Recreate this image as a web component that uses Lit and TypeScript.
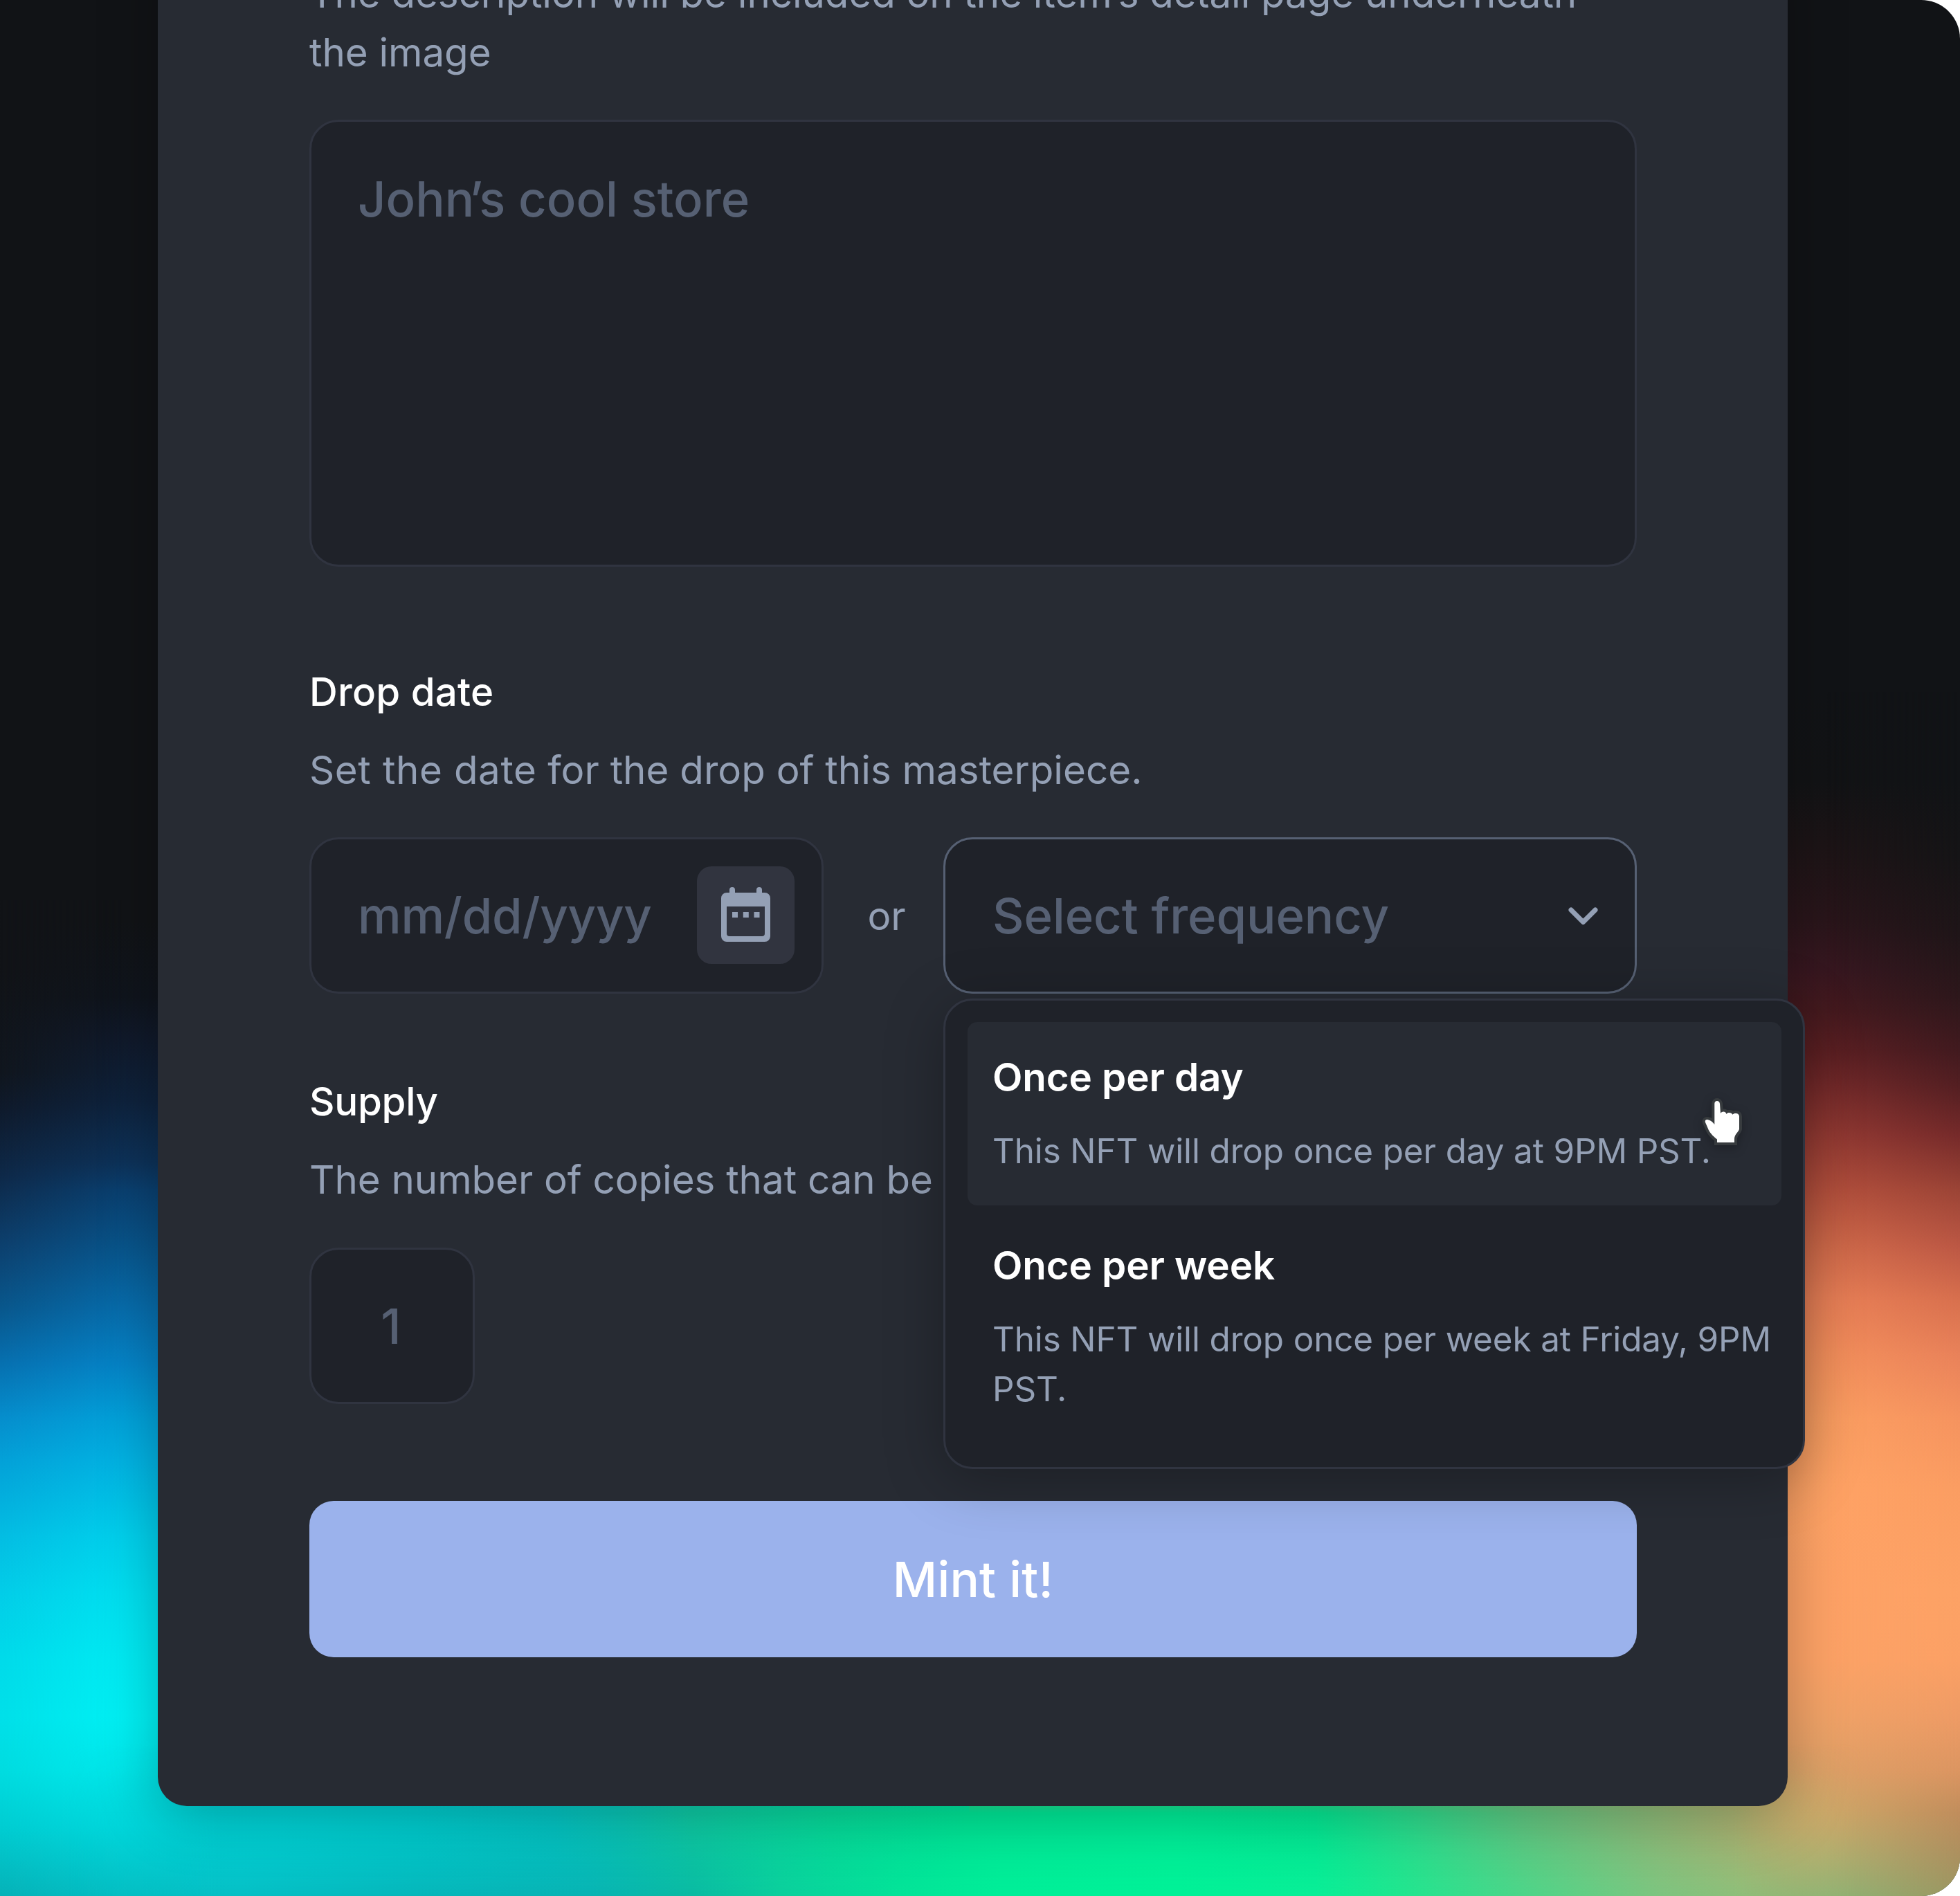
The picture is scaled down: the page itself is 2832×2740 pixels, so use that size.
import { LitElement, html, svg, css } from "lit";
import { customElement } from "lit/decorators.js";

type Stop = [number, string];

const stops = (list: Stop[], from: number, to: number) =>
  list.map(([p, c]) => svg`<stop offset=${(p - from) / (to - from)} stop-color=${c}></stop>`);

const LEFT_OUTER: Stop[] = [
  [1400, "#111317"], [1550, "#10161e"], [1600, "#0f1a2b"], [1700, "#0e2949"], [1800, "#0d406e"],
  [1890, "#09578c"], [1970, "#0770b0"], [2050, "#068ecd"], [2110, "#04a1d8"], [2220, "#04bde3"],
  [2300, "#03cde8"], [2400, "#00dbea"], [2480, "#00e0e9"], [2560, "#00dce0"], [2640, "#01cdd2"], [2740, "#06b2b8"],
];
const LEFT_INNER: Stop[] = [
  [1330, "#111316"], [1440, "#0f141c"], [1500, "#10192a"], [1590, "#0e223c"], [1680, "#0d3259"],
  [1720, "#0a4070"], [1800, "#08548a"], [1890, "#076cab"], [1970, "#0583c6"], [2050, "#02a1d9"],
  [2110, "#02b2e2"], [2220, "#00d0ec"], [2300, "#00dff0"], [2400, "#00ebf3"], [2480, "#00f0f4"],
  [2560, "#00e9ec"], [2640, "#01d8dc"], [2740, "#05bfc4"],
];
const RIGHT_INNER: Stop[] = [
  [1000, "#111316"], [1130, "#121315"], [1220, "#1c1416"], [1330, "#29151a"], [1400, "#371720"],
  [1460, "#461a1f"], [1520, "#5d2023"], [1570, "#742a2a"], [1640, "#933a33"], [1720, "#b4503d"],
  [1800, "#d06a4a"], [1880, "#e98057"], [1960, "#f4905c"], [2050, "#fc9f62"], [2150, "#ffa365"],
  [2300, "#fea266"], [2400, "#fca266"], [2480, "#f0a267"], [2560, "#dfa067"], [2620, "#cda869"],
  [2680, "#b0b070"], [2740, "#90b576"],
];
const RIGHT_OUTER: Stop[] = [
  [1130, "#111316"], [1240, "#151416"], [1350, "#1f1518"], [1440, "#2d171b"], [1520, "#421a1f"],
  [1570, "#541f22"], [1640, "#752a2a"], [1720, "#9b4436"], [1800, "#bb5744"], [1880, "#d8704e"],
  [1960, "#e9825a"], [2050, "#f5935f"], [2150, "#fb9d62"], [2300, "#fda265"], [2400, "#fba065"],
  [2480, "#ee9b65"], [2560, "#db9561"], [2620, "#c08d5c"], [2680, "#ac905f"], [2740, "#9b9661"],
];
const FLOOR_UPPER: Stop[] = [
  [0, "#00d0d5"], [200, "#00d3d8"], [400, "#00d2d5"], [600, "#01cdcf"], [800, "#04c5c4"],
  [900, "#09c6b6"], [1000, "#0ecba5"], [1200, "#06dc9b"], [1400, "#00e898"], [1700, "#00ee98"],
  [1900, "#04e994"], [2050, "#2fdc8d"], [2200, "#5fca83"], [2350, "#84be7b"], [2500, "#a8b473"],
  [2620, "#c4ab6a"], [2700, "#d2a268"], [2832, "#bb9262"],
];
const FLOOR_LOWER: Stop[] = [
  [0, "#06b2b8"], [200, "#05bec2"], [350, "#06bfc5"], [600, "#06b6ba"], [850, "#08b3b3"],
  [1000, "#0abaa2"], [1130, "#0bcf9c"], [1300, "#03e398"], [1450, "#00ee98"], [1700, "#00f197"],
  [1900, "#09ee97"], [2020, "#1fe68f"], [2150, "#40d98b"], [2300, "#65cd84"], [2400, "#7dc47f"],
  [2520, "#8ebe79"], [2650, "#9bb070"], [2750, "#9fa268"], [2832, "#9b9661"],
];

@customElement("aurora-backdrop")
export class AuroraBackdrop extends LitElement {
  static styles = css`
    :host { display: block; width: 100%; height: 100%; }
    svg { display: block; width: 100%; height: 100%; }
  `;

  private column(id: string, list: Stop[]) {
    const a = list[0][0];
    const b = list[list.length - 1][0];
    return svg`<linearGradient id=${id} gradientUnits="userSpaceOnUse" x1="0" x2="0" y1=${a} y2=${b}>${stops(list, a, b)}</linearGradient>`;
  }

  private row(id: string, list: Stop[]) {
    return svg`<linearGradient id=${id} gradientUnits="userSpaceOnUse" x1="0" x2="2832" y1="0" y2="0">${stops(list, 0, 2832)}</linearGradient>`;
  }

  render() {
    return html`
      <svg viewBox="0 0 2832 2740" preserveAspectRatio="none" aria-hidden="true">
        <defs>
          ${this.column("lo", LEFT_OUTER)} ${this.column("li", LEFT_INNER)}
          ${this.column("ri", RIGHT_INNER)} ${this.column("ro", RIGHT_OUTER)}
          ${this.row("fu", FLOOR_UPPER)} ${this.row("fl", FLOOR_LOWER)}
          <linearGradient id="fadeL" gradientUnits="userSpaceOnUse" x1="0" x2="180" y1="0" y2="0">
            <stop offset="0" stop-color="#fff" stop-opacity="0"></stop><stop offset="1" stop-color="#fff"></stop>
          </linearGradient>
          <linearGradient id="fadeR" gradientUnits="userSpaceOnUse" x1="2640" x2="2832" y1="0" y2="0">
            <stop offset="0" stop-color="#fff" stop-opacity="0"></stop><stop offset="1" stop-color="#fff"></stop>
          </linearGradient>
          <linearGradient id="fadeF" gradientUnits="userSpaceOnUse" x1="0" x2="2832" y1="0" y2="0">
            <stop offset="0.035" stop-color="#fff" stop-opacity="0"></stop>
            <stop offset="0.11" stop-color="#fff"></stop>
            <stop offset="0.885" stop-color="#fff"></stop>
            <stop offset="0.95" stop-color="#fff" stop-opacity="0"></stop>
          </linearGradient>
          <linearGradient id="fadeV" gradientUnits="userSpaceOnUse" x1="0" x2="0" y1="2640" y2="2740">
            <stop offset="0" stop-color="#fff" stop-opacity="0"></stop><stop offset="1" stop-color="#fff"></stop>
          </linearGradient>
          <linearGradient id="fadeTop" gradientUnits="userSpaceOnUse" x1="0" x2="0" y1="2520" y2="2620">
            <stop offset="0" stop-color="#fff" stop-opacity="0"></stop><stop offset="1" stop-color="#fff"></stop>
          </linearGradient>
          <mask id="mL" maskUnits="userSpaceOnUse" x="0" y="0" width="2832" height="2740"><rect width="2832" height="2740" fill="url(#fadeL)"></rect></mask>
          <mask id="mR" maskUnits="userSpaceOnUse" x="0" y="0" width="2832" height="2740"><rect width="2832" height="2740" fill="url(#fadeR)"></rect></mask>
          <mask id="mF" maskUnits="userSpaceOnUse" x="0" y="0" width="2832" height="2740"><rect width="2832" height="2740" fill="url(#fadeF)"></rect></mask>
          <mask id="mV" maskUnits="userSpaceOnUse" x="0" y="0" width="2832" height="2740"><rect width="2832" height="2740" fill="url(#fadeV)"></rect></mask>
          <mask id="mT" maskUnits="userSpaceOnUse" x="0" y="0" width="2832" height="2740"><rect width="2832" height="2740" fill="url(#fadeTop)"></rect></mask>
        </defs>
        <rect width="2832" height="2740" fill="#111316"></rect>
        <rect y="1300" width="1400" height="1440" fill="url(#lo)"></rect>
        <rect y="1300" width="1400" height="1440" fill="url(#li)" mask="url(#mL)"></rect>
        <rect x="1400" y="1000" width="1432" height="1740" fill="url(#ri)"></rect>
        <rect x="1400" y="1000" width="1432" height="1740" fill="url(#ro)" mask="url(#mR)"></rect>
        <g mask="url(#mF)">
          <g mask="url(#mT)">
            <rect y="2500" width="2832" height="240" fill="url(#fu)"></rect>
            <rect y="2500" width="2832" height="240" fill="url(#fl)" mask="url(#mV)"></rect>
          </g>
        </g>
      </svg>
    `;
  }
}

@customElement("app-root")
export class AppRoot extends LitElement {
  static styles = css`
    :host {
      display: block;
      background: #fff;
      font-family: Inter, "Liberation Sans", sans-serif;
      color: #94a0b5;
    }
    * { box-sizing: border-box; }
    .stage {
      position: relative;
      width: 2832px;
      height: 2740px;
      overflow: hidden;
      border-radius: 0 56px 56px 0;
    }
    .backdrop { position: absolute; inset: 0; }
    .card {
      position: relative;
      width: 2355px;
      height: 2709.5px;
      margin: -100px 0 0 228px;
      padding: 49px 218px 0 219px;
      border-radius: 42px;
      background: #272b33;
      box-shadow: 0 14px 85px rgba(0, 0, 0, 0.26);
      display: flex;
      flex-direction: column;
    }
    .label, .hint {
      font-size: 56.5px;
      line-height: 84.7px;
    }
    .label { color: #fff; font-weight: 500; margin-bottom: 28px; }
    .hint { margin-bottom: 55px; }
    .intro { letter-spacing: -0.08px; }
    .drop-label { letter-spacing: 0.2px; }
    .drop-hint { margin-bottom: 54px; }
    .lead { letter-spacing: 0.58px; }
    .supply-label { letter-spacing: -0.3px; }
    .supply-hint { letter-spacing: -0.06px; }
    .section { display: flex; flex-direction: column; }
    .field {
      height: 226px;
      border: 3.5px solid #303440;
      border-radius: 42px;
      background: #1f2229;
      color: #566073;
      font-size: 70.6px;
      line-height: 100px;
      font-weight: 500;
      display: flex;
      align-items: center;
    }
    .field span { padding-top: 3px; }
    .area {
      height: 645.5px;
      align-items: flex-start;
      padding: 58.5px 67px;
      margin-bottom: 139.5px;
    }
    .apos { letter-spacing: -5.5px; }
    .row { display: flex; align-items: center; margin-bottom: 114.5px; }
    .date { width: 743px; padding: 0 39px 0 67px; justify-content: space-between; }
    .mm { letter-spacing: -0.27px; }
    .cal {
      width: 141px;
      height: 141px;
      border-radius: 21px;
      background: #31343f;
      display: block;
    }
    .or { width: 173px; text-align: center; font-size: 56.5px; line-height: 84.7px; padding: 3px 0 0 9px; }
    .select-wrap { position: relative; flex: 1; }
    .select { border-color: #566073; padding: 0 53px 0 68px; justify-content: space-between; }
    .freq { letter-spacing: -0.07px; }
    .chev { display: block; width: 43px; height: 26px; margin-top: 3px; }
    .menu {
      position: absolute;
      z-index: 2;
      left: 0;
      top: 233px;
      width: 1245px;
      height: 680px;
      padding: 31.5px;
      border: 3.5px solid #303440;
      border-radius: 42px;
      background: #1f2229;
      box-shadow: 0 14px 85px rgba(0, 0, 0, 0.28);
    }
    .option {
      display: flex;
      flex-direction: column;
      padding: 37px 0 0 36.5px;
      border-radius: 14px;
      margin-bottom: 7px;
    }
    .option.active { background: #272b33; height: 264.6px; }
    .title { color: #fff; font-weight: 600; font-size: 56.5px; line-height: 85px; letter-spacing: -0.11px; }
    .detail { margin-top: 29px; font-size: 49.4px; line-height: 71.7px; letter-spacing: -0.13px; white-space: nowrap; }
    .cursor {
      position: absolute;
      z-index: 3;
      left: 1096.5px;
      top: 376px;
      width: 70px;
      height: 80px;
      overflow: visible;
      filter: drop-shadow(0 4px 7px rgba(0, 0, 0, 0.25));
    }
    .supply { width: 239px; justify-content: center; margin-bottom: 140px; }
    .one { margin-left: -3px; }
    .mint {
      height: 226px;
      border: 0;
      padding: 2px 0 0;
      border-radius: 35px;
      background: #9bb2ec;
      color: #fff;
      font: inherit;
      font-size: 70.6px;
      font-weight: 500;
      letter-spacing: 0.2px;
      width: 100%;
    }
  `;

  render() {
    return html`
      <div class="stage">
        <aurora-backdrop class="backdrop"></aurora-backdrop>
        <main class="card">
          <section class="section">
            <div class="hint intro">The description will be included on the item’s detail page underneath<br />the image</div>
            <div class="field area"><span>Joh<span class="apos">n’</span>s cool store</span></div>
          </section>
          <section class="section">
            <div class="label drop-label">Drop date</div>
            <div class="hint drop-hint"><span class="lead">Set the date</span> for the drop of this masterpiece.</div>
            <div class="row">
              <div class="field date">
                <span class="mm">mm/dd/yyyy</span>
                <svg class="cal" viewBox="0 0 141 141">
                  <path fill="#94a0b5" fill-rule="evenodd" d="M47 38V34a4 4 0 0 1 8 0v4H86V34a4 4 0 0 1 8 0v4h4a8 8 0 0 1 8 8v55a8 8 0 0 1-8 8H43a8 8 0 0 1-8-8V46a8 8 0 0 1 8-8ZM43 58v39a4 4 0 0 0 4 4h47a4 4 0 0 0 4-4V58Z"></path>
                  <path fill="#94a0b5" d="M51 66h8v8h-8ZM66.800 66h8v8h-8ZM82.500 66h8v8h-8Z"></path>
                </svg>
              </div>
              <span class="or">or</span>
              <div class="select-wrap">
                <div class="field select">
                  <span class="freq">Select frequency</span>
                  <svg class="chev" viewBox="0 0 43 26"><path d="M4 4 21.500 21.500 39 4" fill="none" stroke="#94a0b5" stroke-width="7" stroke-linecap="round" stroke-linejoin="round"></path></svg>
                </div>
                <div class="menu">
                  <div class="option active">
                    <div class="title">Once per day</div>
                    <div class="detail">This NFT will drop once per day at 9PM PST.</div>
                  </div>
                  <div class="option">
                    <div class="title">Once per week</div>
                    <div class="detail">This NFT will drop once per week at Friday, 9PM<br />PST.</div>
                  </div>
                </div>
                <svg class="cursor" viewBox="0 0 70 80">
                  <path d="M17.300 9C17.300 3.800 24.500 3.800 25 9L26 23C27.500 19.500 33.500 19.500 34.500 24C36.500 21 42 21.500 43.300 24.800C46 22 53 22.500 53 27.500V45.500C53 49 46 53 46 60V65H21V60.500C15 56 9.500 50 7.500 44L4 36C3 33 5 31.500 8 32.200C12 33 15 36 17.300 39Z" fill="#fff" stroke="#373b3e" stroke-width="8" paint-order="stroke"></path>
                </svg>
              </div>
            </div>
          </section>
          <section class="section">
            <div class="label supply-label">Supply</div>
            <div class="hint supply-hint">The number of copies that can be minted.</div>
            <div class="field supply"><span class="one">1</span></div>
          </section>
          <button class="mint">Mint it!</button>
        </main>
      </div>
    `;
  }
}
